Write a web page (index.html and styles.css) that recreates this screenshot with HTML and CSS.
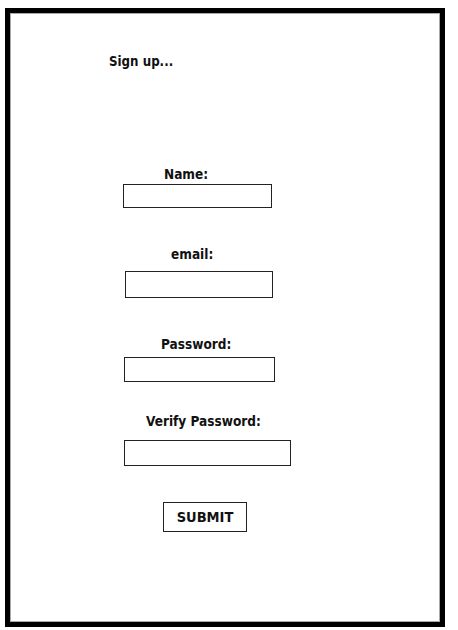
FILE: index.html
```html
<!DOCTYPE html>
<html>
<head>
<meta charset="utf-8">
<link rel="stylesheet" href="styles.css">
</head>
<body>
<div class="frame">
  <h1 class="title">Sign up...</h1>
  <form class="form">
    <div class="field field-name">
      <label class="label">Name:</label>
      <input class="input" type="text">
    </div>
    <div class="field field-email">
      <label class="label">email:</label>
      <input class="input" type="text">
    </div>
    <div class="field field-pass">
      <label class="label">Password:</label>
      <input class="input" type="password">
    </div>
    <div class="field field-verify">
      <label class="label">Verify Password:</label>
      <input class="input" type="password">
    </div>
    <button class="submit" type="button">SUBMIT</button>
  </form>
</div>
</body>
</html>
```

FILE: styles.css
```css
html, body {
  margin: 0;
  padding: 0;
  background: #fff;
}
body {
  padding: 8px 13px 3px 5px;
  font-family: "DejaVu Sans Condensed", "DejaVu Sans", sans-serif;
  color: #111;
}
.frame {
  box-sizing: border-box;
  width: 440px;
  height: 619px;
  border: 5px solid #000;
  box-shadow: inset 0 0 0 1px #aaa;
  padding-top: 41px;
}
.title {
  margin: 0 0 0 99px;
  font-size: 13.2px;
  line-height: 16px;
  font-weight: bold;
}
.form {
  display: flex;
  flex-direction: column;
  align-items: flex-start;
}
.label {
  display: block;
  font-size: 13.5px;
  line-height: 16px;
  font-weight: bold;
}
.input {
  display: block;
  box-sizing: border-box;
  margin: 0;
  padding: 0;
  border: 1px solid #222;
  background: #fff;
}
.field-name { margin-top: 96px; }
.field-name .label { margin-left: 154px; }
.field-name .input { margin: 2px 0 0 113px; width: 149px; height: 24px; }
.field-email { margin-top: 38px; }
.field-email .label { margin-left: 161px; }
.field-email .input { margin: 9px 0 0 115px; width: 148px; height: 27px; }
.field-pass { margin-top: 38px; }
.field-pass .label { margin-left: 151px; }
.field-pass .input { margin: 5px 0 0 114px; width: 151px; height: 25px; }
.field-verify { margin-top: 31px; }
.field-verify .label { margin-left: 136px; }
.field-verify .input { margin: 11px 0 0 114px; width: 167px; height: 26px; }
.submit {
  margin: 36px 0 0 153px;
  width: 84px;
  height: 30px;
  padding: 0;
  border: 1px solid #222;
  background: #fff;
  font-family: "DejaVu Sans Condensed", "DejaVu Sans", sans-serif;
  font-size: 14.5px;
  font-weight: bold;
  color: #111;
}
```
